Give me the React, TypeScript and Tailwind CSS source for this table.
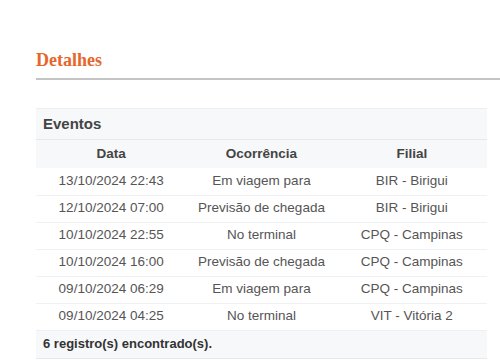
const rows = [
  ["13/10/2024 22:43", "Em viagem para", "BIR - Birigui"],
  ["12/10/2024 07:00", "Previsão de chegada", "BIR - Birigui"],
  ["10/10/2024 22:55", "No terminal", "CPQ - Campinas"],
  ["10/10/2024 16:00", "Previsão de chegada", "CPQ - Campinas"],
  ["09/10/2024 06:29", "Em viagem para", "CPQ - Campinas"],
  ["09/10/2024 04:25", "No terminal", "VIT - Vitória 2"],
];

export default function App() {
  return (
    <div className="h-[364px] w-[500px] overflow-hidden bg-white font-['Liberation_Sans',Arial,sans-serif] text-[#555]">
      <div className="pl-9 pt-[48px]">
        <h2 className="font-['Liberation_Serif',serif] text-[18px] font-bold leading-[24px] text-[#e5672c]">
          Detalhes
        </h2>
        <div className="mt-[6px] h-[2px] bg-[#c4c4c4]" />
      </div>

      <div className="ml-9 mr-[13px] mt-[28px] border-t border-[#eceef0]">
        <div className="flex h-[31px] items-center border-b border-[#e6e8ea] bg-[#f7f8fa] px-[7px] text-[15px] font-bold text-[#444]">
          Eventos
        </div>
        <table className="w-full table-fixed border-collapse text-[13.5px]">
          <thead>
            <tr className="h-[28px] bg-[#f7f8fa] text-[#444]">
              <th className="font-bold">Data</th>
              <th className="font-bold">Ocorrência</th>
              <th className="font-bold">Filial</th>
            </tr>
          </thead>
          <tbody>
            {rows.map((r, i) => (
              <tr key={i} className="h-[27px] border-b border-[#eef0f2]">
                <td className="text-center">{r[0]}</td>
                <td className="text-center">{r[1]}</td>
                <td className="text-center">{r[2]}</td>
              </tr>
            ))}
          </tbody>
        </table>
        <div className="flex h-[28px] items-center border-b border-[#e6e8ea] bg-[#f7f8fa] px-[7px] text-[13px] font-bold text-[#333]">
          6 registro(s) encontrado(s).
        </div>
      </div>
    </div>
  );
}
